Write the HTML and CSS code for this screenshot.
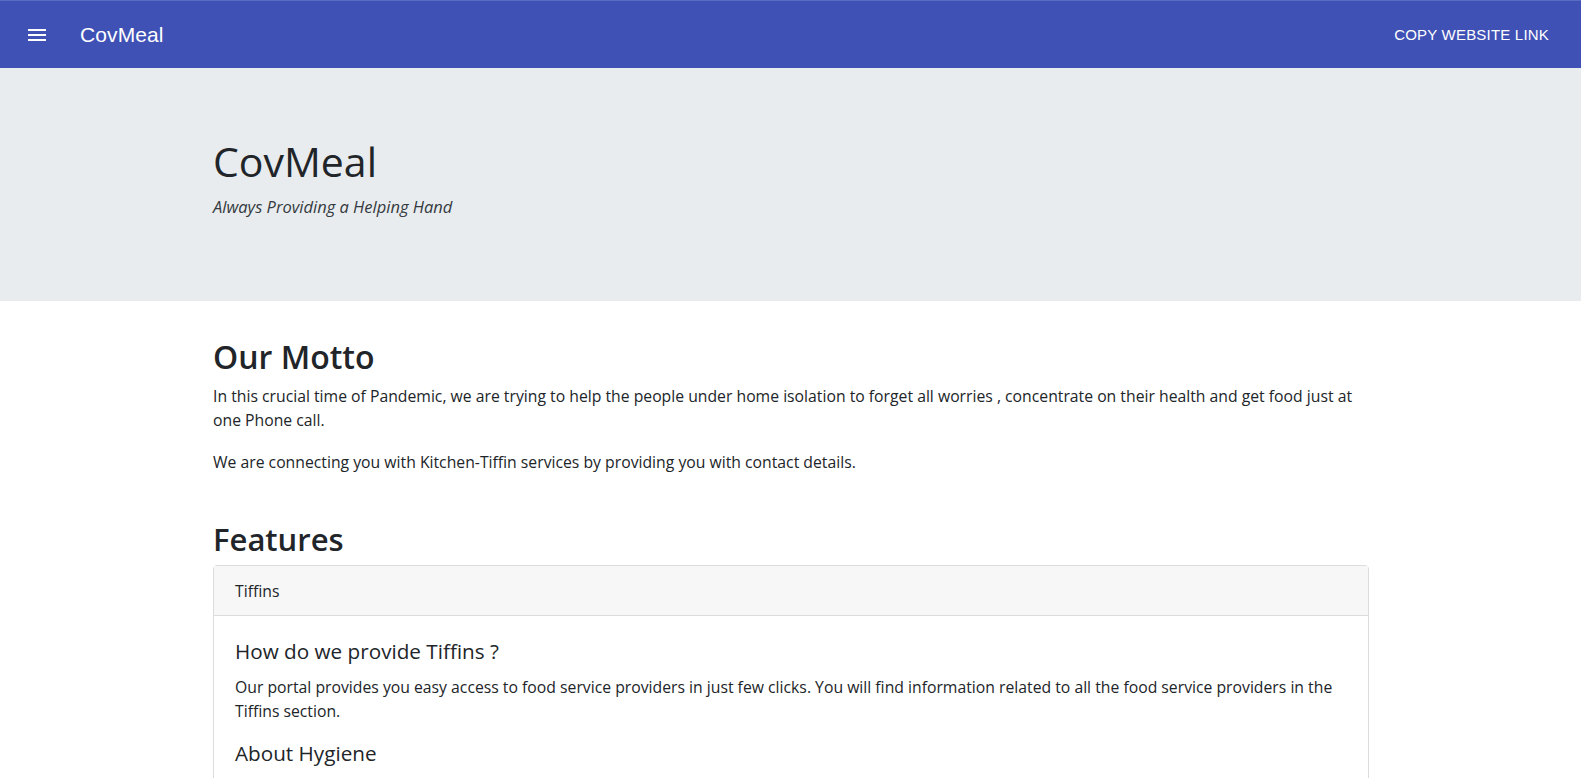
FILE: index.html
```html
<!DOCTYPE html>
<html lang="en">
<head>
<meta charset="utf-8">
<title>CovMeal</title>
<link rel="stylesheet" href="styles.css">
</head>
<body>
<header class="appbar">
  <div class="appbar-left">
    <button class="menu-btn" aria-label="menu">
      <svg width="24" height="24" viewBox="0 0 24 24"><path d="M3 18h18v-2H3v2zm0-5h18v-2H3v2zm0-7v2h18V6H3z" fill="#fff"/></svg>
    </button>
    <span class="brand">CovMeal</span>
  </div>
  <button class="copy-btn">COPY WEBSITE LINK</button>
</header>
<section class="jumbotron">
  <div class="container">
    <h1 class="display">CovMeal</h1>
    <p class="tagline">Always Providing a Helping Hand</p>
  </div>
</section>
<main class="container content">
  <h2 class="section-title">Our Motto</h2>
  <p class="text">In this crucial time of Pandemic, we are trying to help the people under home isolation to forget all worries , concentrate on their health and get food just at one Phone call.</p>
  <p class="text">We are connecting you with Kitchen-Tiffin services by providing you with contact details.</p>
  <h2 class="section-title features">Features</h2>
  <div class="card">
    <div class="card-header">Tiffins</div>
    <div class="card-body">
      <h5 class="card-title">How do we provide Tiffins ?</h5>
      <p class="text">Our portal provides you easy access to food service providers in just few clicks. You will find information related to all the food service providers in the Tiffins section.</p>
      <h5 class="card-title">About Hygiene</h5>
      <p class="text">All the food service providers are following the safety guidelines and maintaining hygiene while preparing food.</p>
    </div>
  </div>
</main>
</body>
</html>
```
FILE: styles.css
```css
* { box-sizing: border-box; }
html, body { margin: 0; padding: 0; }
body {
  font-family: "Open Sans", "Noto Sans", sans-serif;
  color: #212529;
  background: #fff;
  width: 1581px;
}
.appbar {
  height: 68px;
  background: #3f51b5;
  display: flex;
  align-items: center;
  justify-content: space-between;
  padding: 0 24px 0 24px;
  border-top: 1px solid #5a6bc4;
}
.appbar-left { display: flex; align-items: center; }
.menu-btn {
  background: none; border: 0; padding: 0; margin: 0 31px 0 1px;
  width: 24px; height: 24px; display: flex;
}
.brand {
  font-family: "Liberation Sans", Arial, sans-serif;
  color: #fff;
  font-size: 21px;
  letter-spacing: 0.1px;
}
.copy-btn {
  background: none; border: 0; color: #fff;
  font-family: "Liberation Sans", Arial, sans-serif;
  font-size: 15px;
  letter-spacing: 0.2px;
  padding: 6px 8px;
  margin-right: 0;
}
.container { width: 1156px; margin-left: 213px; }
.jumbotron {
  background: #e9ecef;
  height: 233px;
  padding-top: 69px;
}
.display {
  margin: 0;
  font-size: 41px;
  font-weight: 500;
  line-height: 1.2;
}
.tagline {
  margin: 9px 0 0;
  font-size: 16.5px;
  font-style: italic;
  color: #343a40;
}
.content { padding-top: 37px; }
.section-title {
  margin: 0 0 8px;
  font-size: 32px;
  font-weight: 600;
  line-height: 1.2;
}
.features { margin-top: 47px; margin-bottom: 6px; font-size: 31px; }
.text {
  margin: 0 0 18px;
  font-size: 15.75px;
  line-height: 24px;
}
.card {
  border: 1px solid #dcdcdc;
  border-radius: 4px;
}
.card-header {
  background: #f7f7f7;
  border-bottom: 1px solid #dcdcdc;
  padding: 13px 21px 12px;
  font-size: 15.75px;
  line-height: 24px;
}
.card-body { padding: 23px 21px 20px; }
.card-title {
  margin: 0 0 12px;
  font-size: 20.7px;
  font-weight: 500;
  line-height: 1.2;
}
```
